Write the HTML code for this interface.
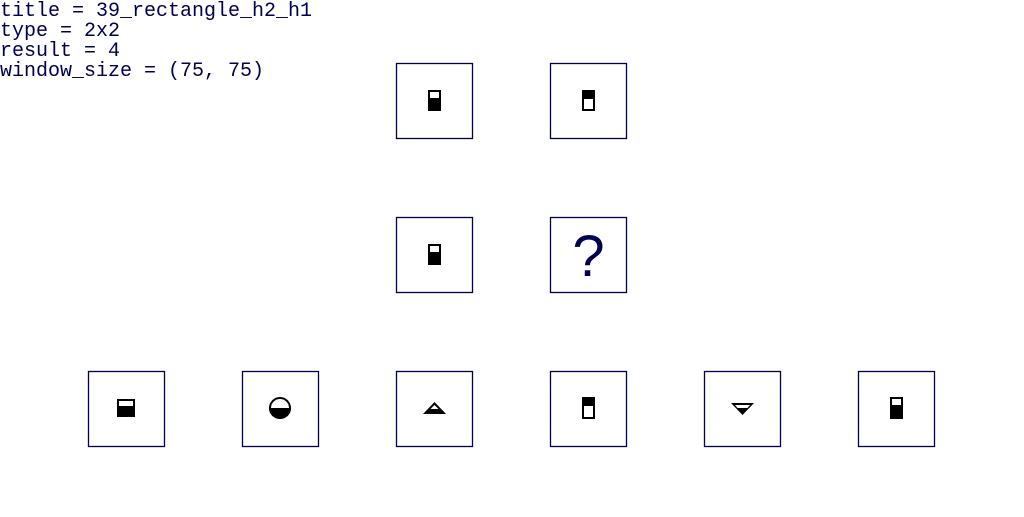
<!DOCTYPE html>
<html><head><style>body{margin:0;background:#fff;width:1024px;height:512px;overflow:hidden}</style></head><body>
<svg width="1024" height="512" xmlns="http://www.w3.org/2000/svg">
<g font-family="Liberation Mono, monospace" font-size="20" fill="#000050">
<text x="0" y="16">title = 39_rectangle_h2_h1</text>
<text x="0" y="36">type = 2x2</text>
<text x="0" y="56">result = 4</text>
<text x="0" y="76">window_size = (75, 75)</text>
</g>
<g fill="none" stroke="#000050" stroke-width="1.3">
<rect x="396.5" y="63.5" width="76" height="75"/>
<rect x="550.5" y="63.5" width="76" height="75"/>
<rect x="396.5" y="217.5" width="76" height="75"/>
<rect x="550.5" y="217.5" width="76" height="75"/>
<rect x="88.5" y="371.5" width="76" height="75"/>
<rect x="242.5" y="371.5" width="76" height="75"/>
<rect x="396.5" y="371.5" width="76" height="75"/>
<rect x="550.5" y="371.5" width="76" height="75"/>
<rect x="704.5" y="371.5" width="76" height="75"/>
<rect x="858.5" y="371.5" width="76" height="75"/>
</g>
<g stroke="#000" stroke-width="2">
<!-- top-left: top white -->
<rect x="429" y="91" width="11" height="19" fill="#000"/><rect x="429" y="91" width="11" height="8" fill="#fff"/>
<!-- top-right: top black -->
<rect x="583" y="91" width="11" height="19" fill="#fff"/><rect x="583" y="91" width="11" height="7" fill="#000"/>
<!-- middle-left -->
<rect x="429" y="245" width="11" height="19" fill="#000"/><rect x="429" y="245" width="11" height="8" fill="#fff"/>
<!-- bottom 1 -->
<rect x="118" y="400" width="16" height="16" fill="#000"/><rect x="118" y="400" width="16" height="7" fill="#fff"/>
<!-- bottom 4 -->
<rect x="583" y="398" width="11" height="20" fill="#fff"/><rect x="583" y="398" width="11" height="7" fill="#000"/>
<!-- bottom 6 -->
<rect x="891" y="398" width="11" height="20" fill="#000"/><rect x="891" y="398" width="11" height="8" fill="#fff"/>
</g>
<!-- circle -->
<circle cx="280" cy="408" r="10" fill="#fff" stroke="#000" stroke-width="2"/>
<path d="M269 408 A11 11 0 0 0 291 408 Z" fill="#000"/>
<!-- triangle up -->
<path d="M434.5 402 L446 414 L423 414 Z" fill="#000"/>
<path d="M434.5 405 L438.5 409 L430.5 409 Z" fill="#fff"/>
<!-- triangle down -->
<path d="M731 403 L754 403 L742.5 415 Z" fill="#000"/>
<path d="M735 405 L750 405 L747.5 408 L737.5 408 Z" fill="#fff"/>
<text x="588.5" y="276" text-anchor="middle" font-family="Liberation Sans, sans-serif" font-size="58" fill="#000050">?</text>
</svg>
</body></html>
